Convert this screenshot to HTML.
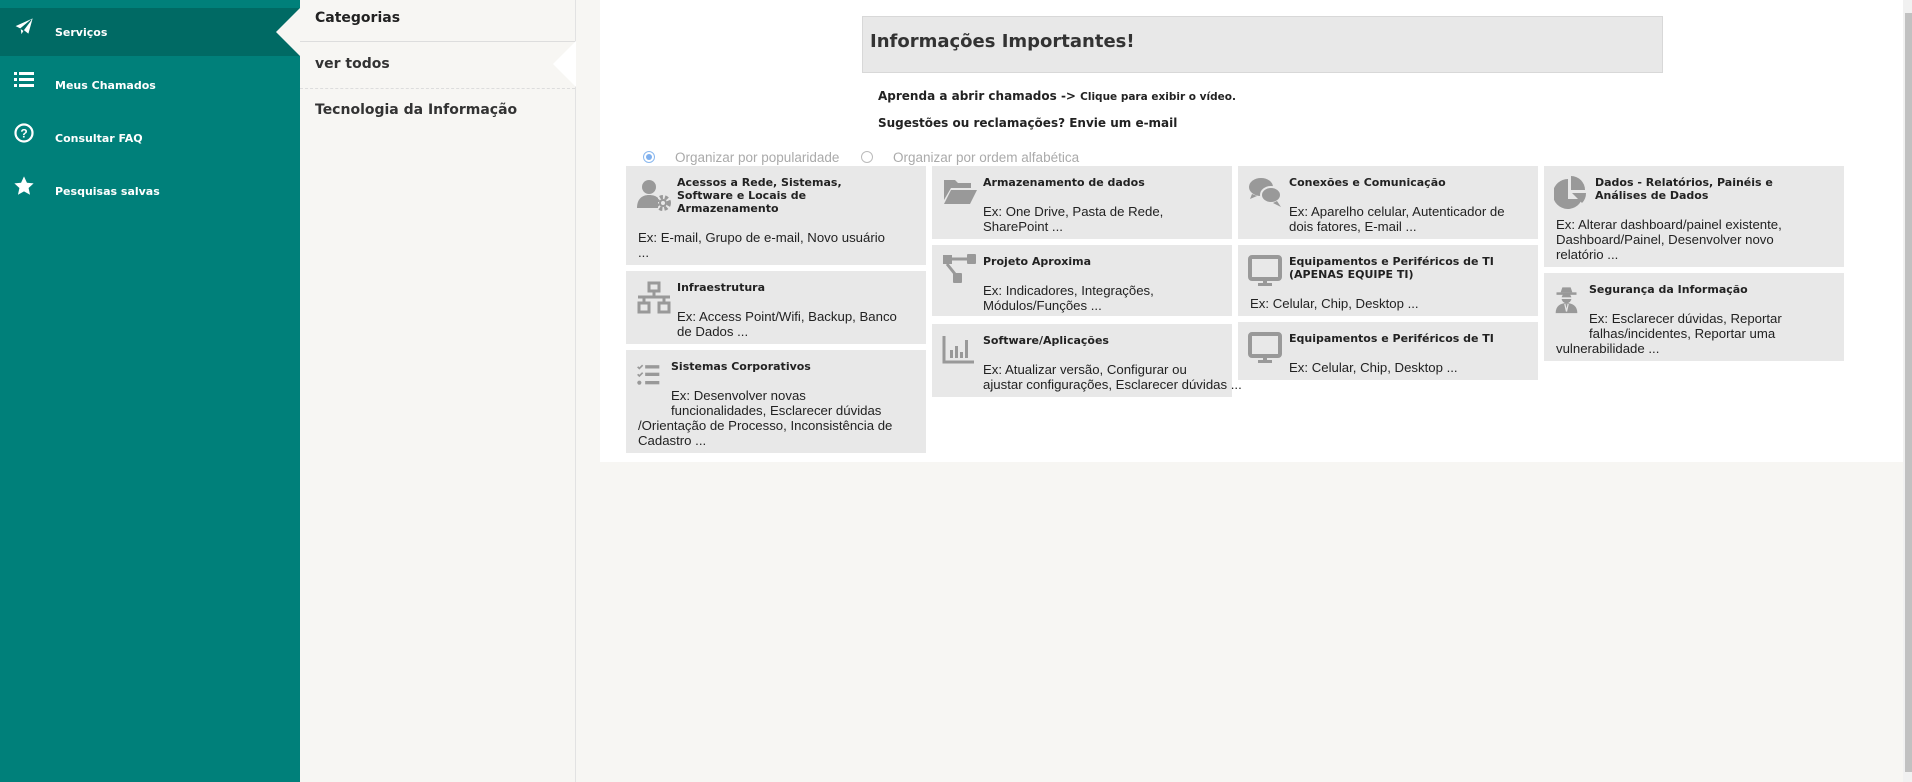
<!DOCTYPE html>
<html><head><meta charset="utf-8">
<style>
*{box-sizing:border-box;margin:0;padding:0}
html,body{width:1912px;height:782px;overflow:hidden;background:#f7f6f3;font-family:"Liberation Sans",sans-serif;position:relative}
.side{position:absolute;left:0;top:0;width:300px;height:782px;background:#00807a}
.nav{position:absolute;left:0;width:300px;height:48px;color:#fff;font-weight:bold;font-family:"DejaVu Sans",sans-serif;font-size:11px}
.nav.act{background:#006a64}
.nav svg{position:absolute;left:13px;top:8px}
.nav span{position:absolute;left:55px;top:18px}
.arrow{position:absolute;left:276px;top:8px;width:0;height:0;border-top:24px solid transparent;border-bottom:24px solid transparent;border-right:24px solid #f7f6f3}
.cat{position:absolute;left:300px;top:0;width:276px;height:782px;background:#f7f6f3;border-right:1px solid #e2e2e2}
.cat div{position:absolute;left:15px;font-weight:bold;font-size:14px;color:#222;font-family:"DejaVu Sans",sans-serif}
.hl{position:absolute;left:300px;width:275px;height:0}
.main{position:absolute;left:600px;top:0;width:1303px;height:462px;background:#fff}
.sb{position:absolute;left:1903px;top:0;width:9px;height:782px;background:#f1f1f1}
.sb i{position:absolute;left:2px;top:13px;width:7px;height:759px;background:#c1c1c1}
.info{position:absolute;left:862px;top:16px;width:801px;height:57px;background:#e8e8e8;border:1px solid #d8d8d8}
.info b{position:absolute;left:7px;top:14px;font-size:18px;color:#333;font-family:"DejaVu Sans",sans-serif}
.t{position:absolute;font-size:12px;font-weight:bold;color:#222;font-family:"DejaVu Sans",sans-serif}
.rad{position:absolute;top:151px;width:12px;height:12px;border-radius:50%;border:1px solid #bbb;background:#fff}
.rad.on{border-color:#8ab8ee}
.rad.on:after{content:"";position:absolute;left:2px;top:2px;width:6px;height:6px;border-radius:50%;background:#7fb0ee}
.rl{position:absolute;top:150px;font-size:13.5px;color:#aaa}
.card{position:absolute;width:300px;background:#e8e8e8;padding:10px 6px 5px 12px;font-size:13.2px;line-height:15px;color:#222;white-space:nowrap}
.card svg{float:left;width:36px;height:46px;margin:-2px 5px 0 -2px}
.card svg.s{height:36px}
.card h4{font-size:11px;line-height:13px;font-weight:bold;color:#222;margin-bottom:15px;font-family:"DejaVu Sans",sans-serif}
</style></head><body>
<div class="side">
 <div class="nav act" style="top:8px"><svg width="22" height="22" viewBox="0 0 24 24"><path d="M22 2L2 11l6 3 1 7 3-5 5 4z M8 14l12-10-9 12" fill="#fff" stroke="#006a64" stroke-width="0.8"/></svg><span>Serviços</span></div>
 <div class="arrow"></div>
 <div class="nav" style="top:61px"><svg width="22" height="22" viewBox="0 0 22 22"><rect x="1" y="3" width="3" height="3" fill="#fff"/><rect x="6" y="3" width="15" height="3" fill="#fff"/><rect x="1" y="9" width="3" height="3" fill="#fff"/><rect x="6" y="9" width="15" height="3" fill="#fff"/><rect x="1" y="15" width="3" height="3" fill="#fff"/><rect x="6" y="15" width="15" height="3" fill="#fff"/></svg><span>Meus Chamados</span></div>
 <div class="nav" style="top:114px"><svg width="22" height="22" viewBox="0 0 22 22"><circle cx="11" cy="11" r="8.5" fill="none" stroke="#fff" stroke-width="2.2"/><text x="11" y="15.5" text-anchor="middle" font-size="12" font-weight="bold" fill="#fff" font-family="Liberation Sans">?</text></svg><span>Consultar FAQ</span></div>
 <div class="nav" style="top:167px"><svg width="22" height="22" viewBox="0 0 24 24"><path d="M12 1.5l3.2 7 7.3.7-5.5 5 1.6 7.3L12 17.8l-6.6 3.7L7 14.2l-5.5-5 7.3-.7z" fill="#fff"/></svg><span>Pesquisas salvas</span></div>
</div>
<div class="cat">
 <div style="top:10px">Categorias</div>
 <div style="top:56px;color:#333">ver todos</div>
 <div style="top:102px;color:#333">Tecnologia da Informação</div>
</div>
<div class="hl" style="top:41px;border-top:1px solid #ddd"></div>
<div class="hl" style="top:88px;border-top:1px dashed #ddd"></div>
<div style="position:absolute;left:553px;top:41px;width:0;height:0;border-top:23px solid transparent;border-bottom:23px solid transparent;border-right:23px solid #fff"></div>
<div class="main"></div>
<div class="sb"><i></i></div>
<div class="info"><b>Informações Importantes!</b></div>
<div class="t" style="left:878px;top:89px">Aprenda a abrir chamados -&gt; <span style="font-size:10.5px">Clique para exibir o vídeo.</span></div>
<div class="t" style="left:878px;top:116px">Sugestões ou reclamações? Envie um e-mail</div>
<div class="rad on" style="left:643px"></div><div class="rl" style="left:675px">Organizar por popularidade</div>
<div class="rad" style="left:861px"></div><div class="rl" style="left:893px">Organizar por ordem alfabética</div>

<div class="card" style="left:626px;top:166px;height:99px"><svg viewBox="0 0 36 46"><circle cx="13" cy="13" r="7" fill="#999"/><path d="M1 34c0-9 5-13 12-13 4 0 7 1 9 3v10z" fill="#999"/><circle cx="27" cy="29" r="6" fill="none" stroke="#999" stroke-width="4" stroke-dasharray="3 2"/><circle cx="27" cy="29" r="4" fill="#999"/><circle cx="27" cy="29" r="2" fill="#e8e8e8"/></svg><h4>Acessos a Rede, Sistemas,<br>Software e Locais de<br>Armazenamento</h4>Ex: E-mail, Grupo de e-mail, Novo usuário<br>...</div>
<div class="card" style="left:626px;top:271px;height:73px"><svg viewBox="0 0 36 46"><rect x="13" y="4" width="10" height="8" fill="none" stroke="#999" stroke-width="3"/><path d="M18 12v5M2 18h32M8 18v6M28 18v6" stroke="#999" stroke-width="3" fill="none"/><rect x="3" y="24" width="10" height="9" fill="none" stroke="#999" stroke-width="3"/><rect x="23" y="24" width="10" height="9" fill="none" stroke="#999" stroke-width="3"/></svg><h4>Infraestrutura</h4>Ex: Access Point/Wifi, Backup, Banco<br>de Dados ...</div>
<div class="card" style="left:626px;top:350px;height:103px"><svg viewBox="0 0 36 46" style="width:30px"><path d="M2 6l2 2 4-4M2 15l2 2 4-4" stroke="#999" stroke-width="2" fill="none"/><circle cx="4" cy="25" r="2.5" fill="#999"/><rect x="11" y="4" width="17" height="4" fill="#999"/><rect x="11" y="13" width="17" height="4" fill="#999"/><rect x="11" y="23" width="17" height="4" fill="#999"/></svg><h4>Sistemas Corporativos</h4>Ex: Desenvolver novas<br>funcionalidades, Esclarecer dúvidas<br>/Orientação de Processo, Inconsistência de<br>Cadastro ...</div>

<div class="card" style="left:932px;top:166px;height:73px"><svg viewBox="0 0 36 46"><path d="M2 6h11l3 3h13v5H9L2 26z" fill="#999"/><path d="M9 16h26l-7 14H2z" fill="#999"/></svg><h4>Armazenamento de dados</h4>Ex: One Drive, Pasta de Rede,<br>SharePoint ...</div>
<div class="card" style="left:932px;top:245px;height:71px"><svg viewBox="0 0 36 46"><rect x="1" y="2" width="9" height="9" fill="#999"/><rect x="25" y="1" width="9" height="10" rx="1" fill="#999"/><path d="M10 6h15M5 11l8 10" stroke="#999" stroke-width="3"/><rect x="11" y="20" width="9" height="10" rx="1" fill="#999"/></svg><h4>Projeto Aproxima</h4>Ex: Indicadores, Integrações,<br>Módulos/Funções ...</div>
<div class="card" style="left:932px;top:324px;height:73px"><svg viewBox="0 0 36 46"><path d="M2 4v26h30" stroke="#999" stroke-width="3" fill="none"/><rect x="8" y="18" width="3" height="8" fill="#999"/><rect x="13" y="14" width="3" height="12" fill="#999"/><rect x="18" y="20" width="3" height="6" fill="#999"/><rect x="23" y="8" width="3" height="18" fill="#999"/></svg><h4>Software/Aplicações</h4>Ex: Atualizar versão, Configurar ou<br>ajustar configurações, Esclarecer dúvidas ...</div>

<div class="card" style="left:1238px;top:166px;height:73px"><svg viewBox="0 0 36 46"><ellipse cx="13" cy="13" rx="12" ry="9" fill="#999"/><path d="M4 20l-2 5 7-3z" fill="#999"/><ellipse cx="23" cy="21" rx="10" ry="8" fill="#999" stroke="#e8e8e8" stroke-width="2"/><path d="M29 27l4 6-8-4z" fill="#999"/></svg><h4>Conexões e Comunicação</h4>Ex: Aparelho celular, Autenticador de<br>dois fatores, E-mail ...</div>
<div class="card" style="left:1238px;top:245px;height:71px"><svg class="s" viewBox="0 0 36 36"><rect x="2" y="4" width="30" height="22" rx="2" fill="none" stroke="#999" stroke-width="4"/><rect x="15" y="26" width="4" height="4" fill="#999"/><rect x="10" y="30" width="14" height="3" fill="#999"/></svg><h4>Equipamentos e Periféricos de TI<br>(APENAS EQUIPE TI)</h4>Ex: Celular, Chip, Desktop ...</div>
<div class="card" style="left:1238px;top:322px;height:58px"><svg viewBox="0 0 36 46"><rect x="2" y="4" width="30" height="22" rx="2" fill="none" stroke="#999" stroke-width="4"/><rect x="15" y="26" width="4" height="4" fill="#999"/><rect x="10" y="30" width="14" height="3" fill="#999"/></svg><h4>Equipamentos e Periféricos de TI</h4>Ex: Celular, Chip, Desktop ...</div>

<div class="card" style="left:1544px;top:166px;height:101px"><svg class="s" viewBox="0 0 36 36"><path d="M14 5a15 15 0 1 0 14 20H14z" fill="#999"/><path d="M17 2a14 14 0 0 1 14 14H17z" fill="#999"/><path d="M18 19h14a14 14 0 0 1-4 10z" fill="#999"/></svg><h4>Dados - Relatórios, Painéis e<br>Análises de Dados</h4>Ex: Alterar dashboard/painel existente,<br>Dashboard/Painel, Desenvolver novo<br>relatório ...</div>
<div class="card" style="left:1544px;top:273px;height:88px"><svg viewBox="0 0 36 46" style="width:30px"><path d="M8 9l2-6h10l2 6z" fill="#999"/><rect x="3" y="9" width="24" height="3" fill="#999"/><circle cx="15" cy="16" r="6" fill="#999"/><rect x="9" y="15" width="12" height="2" fill="#e8e8e8"/><path d="M2 34c0-8 5-12 13-12s13 4 13 12z" fill="#999"/><path d="M13 23l2 9 2-9" stroke="#e8e8e8" stroke-width="1.5" fill="none"/></svg><h4>Segurança da Informação</h4>Ex: Esclarecer dúvidas, Reportar<br>falhas/incidentes, Reportar uma<br>vulnerabilidade ...</div>
</body></html>
